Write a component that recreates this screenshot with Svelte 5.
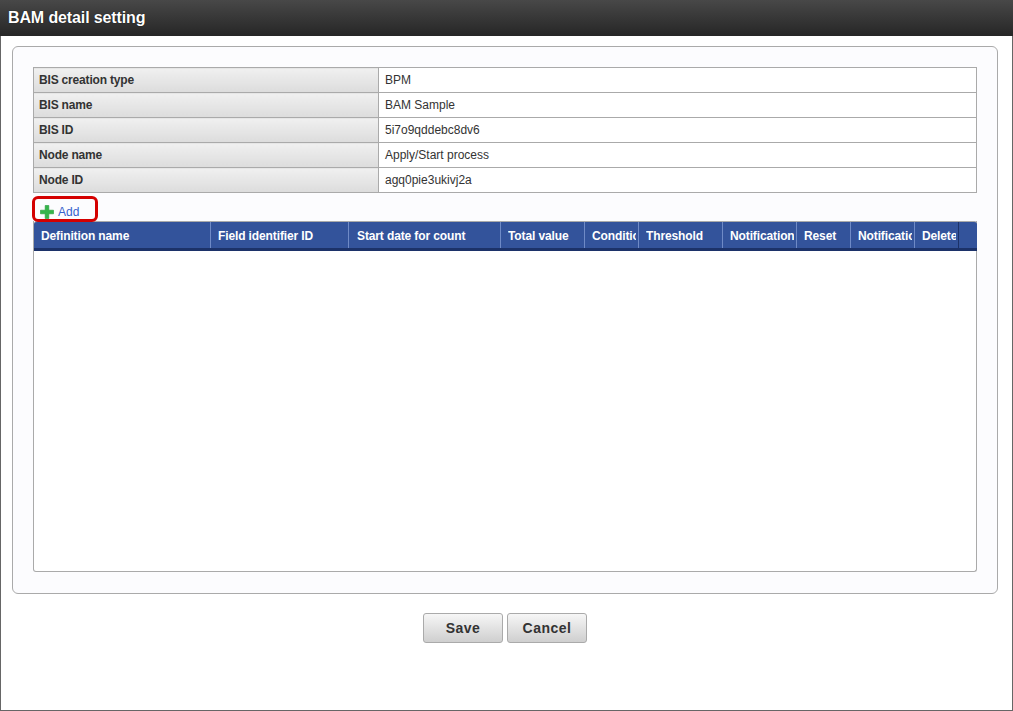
<script>
  const info = [
    ['BIS creation type', 'BPM'],
    ['BIS name', 'BAM Sample'],
    ['BIS ID', '5i7o9qddebc8dv6'],
    ['Node name', 'Apply/Start process'],
    ['Node ID', 'agq0pie3ukivj2a']
  ];
  const columns = [
    ['Definition name', 177],
    ['Field identifier ID', 138],
    ['Start date for count', 152],
    ['Total value', 84],
    ['Condition', 54],
    ['Threshold', 84],
    ['Notification', 74],
    ['Reset', 54],
    ['Notification', 64],
    ['Delete', 44]
  ];
</script>

<div class="window">
  <header class="title">BAM detail setting</header>

  <main class="body">
    <section class="panel">
      <table class="info">
        <tbody>
          {#each info as [label, value]}
            <tr>
              <th>{label}</th>
              <td>{value}</td>
            </tr>
          {/each}
        </tbody>
      </table>

      <div class="toolbar">
        <a class="add" href="#add">
          <svg width="14" height="14" viewBox="0 0 14 14" aria-hidden="true">
            <path d="M5.2 0.5h3.6v4.7h4.7v3.6H8.8v4.7H5.2V8.8H0.5V5.2h4.7z" fill="#35b54a" stroke="#229a38" stroke-width="0.6" />
          </svg>
          <span>Add</span>
        </a>
        <span class="highlight"></span>
      </div>

      <div class="grid">
        <div class="grid-head">
          {#each columns as [name, width]}
            <div class="col" style="width:{width}px"><span>{name}</span></div>
          {/each}
        </div>
      </div>
    </section>

    <div class="actions">
      <button type="button">Save</button>
      <button type="button">Cancel</button>
    </div>
  </main>
</div>

<style>
  :global(body) {
    background: #fff;
    font-family: "Liberation Sans", Arial, sans-serif;
  }

  .window {
    box-sizing: border-box;
    width: 1013px;
    height: 711px;
    display: flex;
    flex-direction: column;
    border: 1px solid #666;
    border-top: 0;
    background: #fff;
  }

  .title {
    flex: none;
    box-sizing: border-box;
    height: 36px;
    margin: 0 -1px;
    padding: 0 8px;
    line-height: 35px;
    font-size: 16px;
    font-weight: bold;
    letter-spacing: -0.12px;
    color: #fff;
    text-shadow: 0 0 1px #000;
    background: linear-gradient(to bottom, #484848, #262626);
  }

  .body {
    flex: 1;
    padding: 10px 14px 0 11px;
  }

  .panel {
    box-sizing: border-box;
    height: 548px;
    padding: 20px;
    background: #fcfcfe;
    border: 1px solid #aaa;
    border-radius: 6px;
  }

  .info {
    width: 944px;
    border-collapse: collapse;
    table-layout: fixed;
    font-size: 12px;
  }

  .info th,
  .info td {
    box-sizing: border-box;
    height: 25px;
    padding: 0 5px;
    border: 1px solid #aaa;
    text-align: left;
    color: #333;
  }

  .info th {
    width: 345px;
    background: linear-gradient(to bottom, #f0f0f0, #dcdcdc);
    font-weight: bold;
    letter-spacing: -0.18px;
  }

  .info td {
    padding-left: 6px;
    background: #fff;
  }

  .toolbar {
    position: relative;
    height: 28px;
  }

  .add {
    display: flex;
    align-items: center;
    gap: 4px;
    height: 28px;
    padding: 9px 0 0 7px;
    box-sizing: border-box;
    font-size: 12px;
    color: #3560cc;
    text-decoration: none;
  }

  .highlight {
    position: absolute;
    left: -1px;
    top: 3px;
    width: 66px;
    height: 26px;
    box-sizing: border-box;
    border: 3px solid #d40000;
    border-radius: 6px;
  }

  .grid {
    box-sizing: border-box;
    width: 944px;
    height: 351px;
    background: #fff;
    border: 1px solid #aaa;
    border-top: 0;
    border-radius: 0 0 3px 3px;
  }

  .grid-head {
    display: flex;
    box-sizing: border-box;
    height: 30px;
    margin: 0 -1px 0 0;
    background: #33539b;
    border-top: 1px solid #aaa;
    border-bottom: 3px solid #1c3269;
    border-radius: 3px 3px 0 0;
  }

  .col {
    flex: none;
    box-sizing: border-box;
    height: 26px;
    padding: 0 2px 0 7px;
    border-right: 1px solid #6f8ac6;
    font-size: 12px;
    font-weight: bold;
    letter-spacing: -0.12px;
    line-height: 28px;
    color: #fff;
    white-space: nowrap;
  }

  .col:nth-child(3) {
    padding-left: 8px;
  }

  .col:last-child {
    border-right-color: #1c3269;
  }

  .col span {
    display: block;
    overflow: hidden;
  }

  .actions {
    display: flex;
    justify-content: center;
    gap: 4px;
    padding: 19px 0 0 0;
  }

  button {
    box-sizing: border-box;
    width: 80px;
    height: 30px;
    padding: 0;
    border: 1px solid #aaa;
    border-radius: 3px;
    background: linear-gradient(to bottom, #f6f6f6, #cfcfcf);
    font-family: "Liberation Sans", Arial, sans-serif;
    font-size: 14px;
    font-weight: bold;
    letter-spacing: 0.5px;
    color: #333;
  }
</style>
